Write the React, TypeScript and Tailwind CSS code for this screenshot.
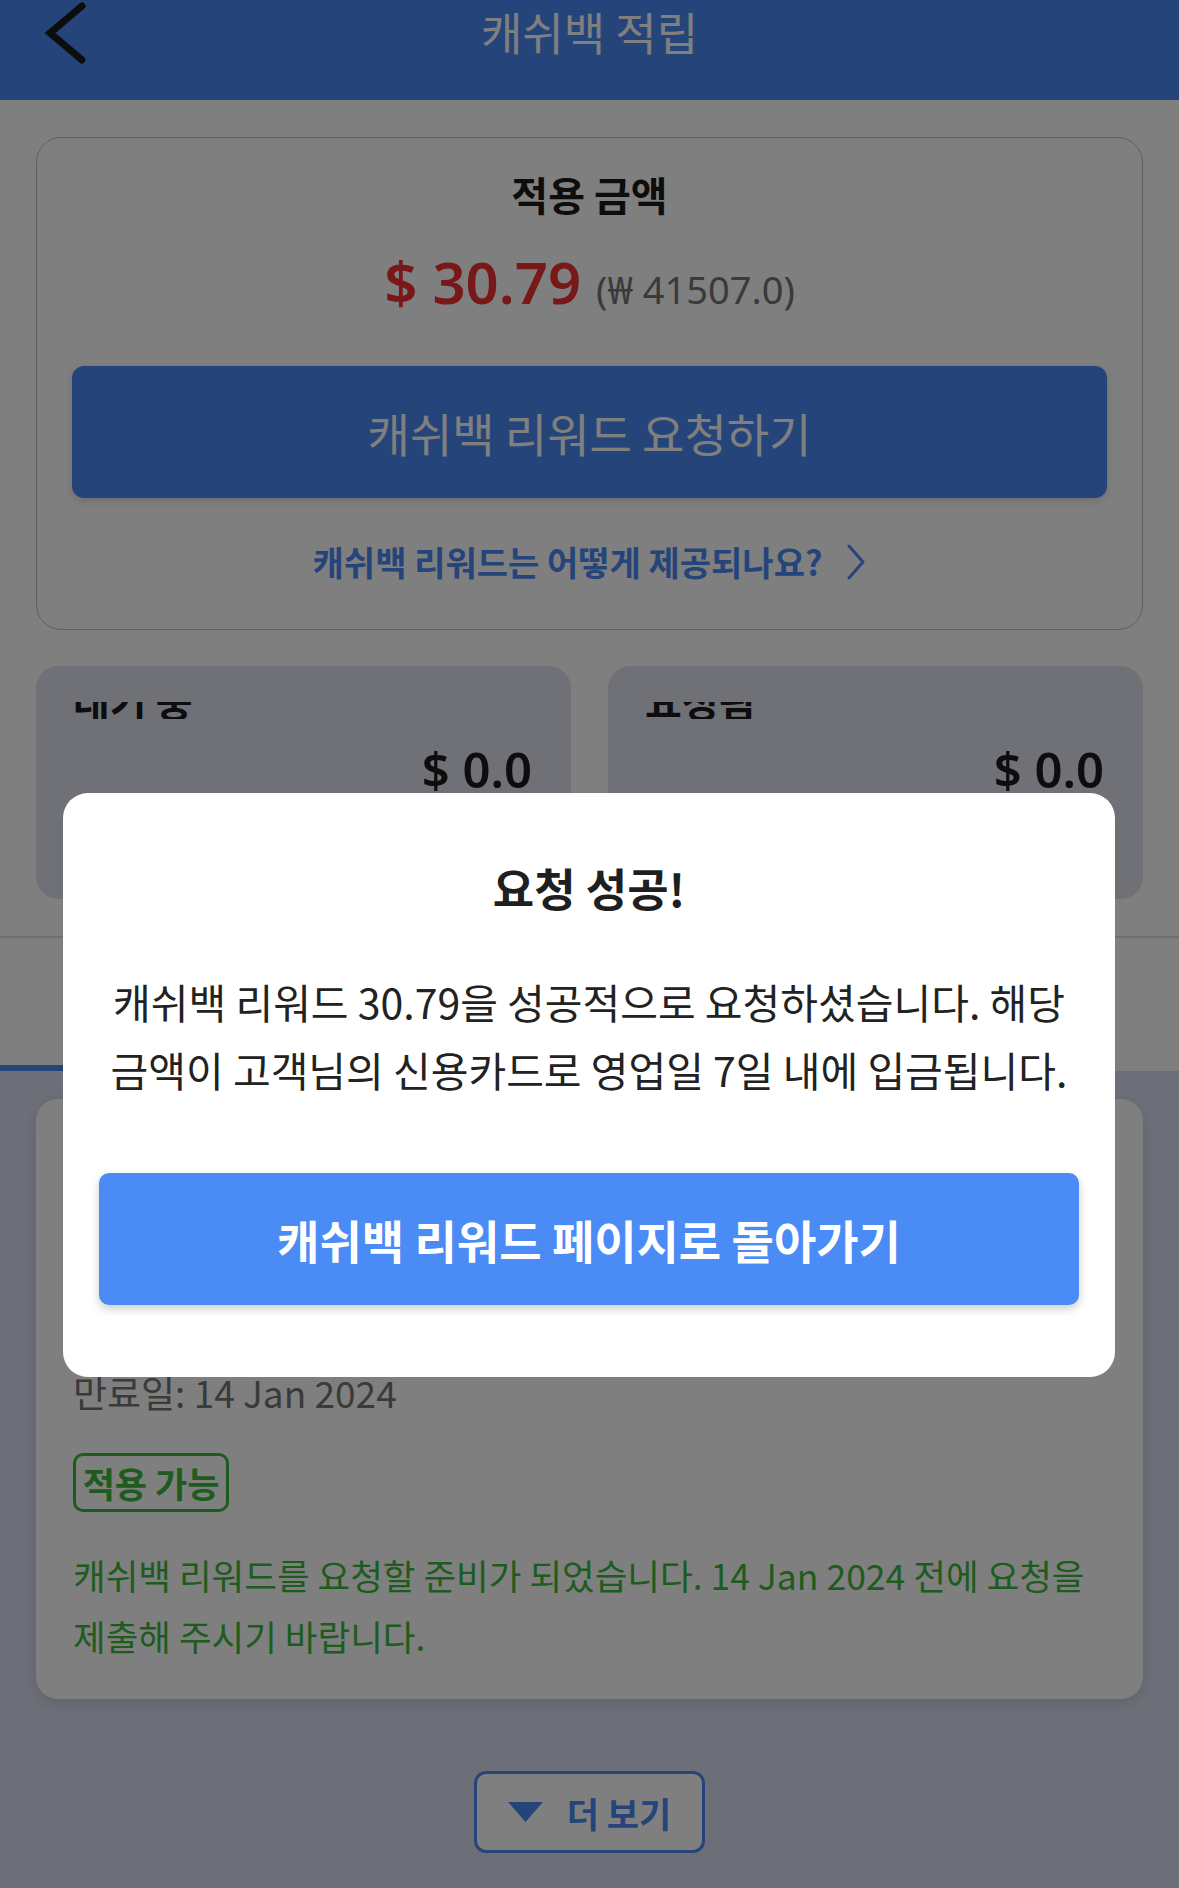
import React from "react";

function BackChevron() {
  return (
    <svg className="absolute left-[40px] top-0" width="52" height="68" viewBox="0 0 52 68" fill="none">
      <polyline points="42,6 10,33 42,60" stroke="#1b1b1b" strokeWidth="7" strokeLinecap="round" strokeLinejoin="miter" />
    </svg>
  );
}

function SmallCard({ label, value }: { label: string; value: string }) {
  return (
    <div className="h-[233px] rounded-[22px] bg-[#e1e3ee] pl-[37px] pr-[39px] pt-[36px]">
      <div className="h-[17px] overflow-hidden">
        <div className="-mt-[22px] text-[40px] font-bold leading-[40px] text-[#1a1a1a]">{label}</div>
      </div>
      <div className="mt-[24px] text-right font-['Noto_Sans',sans-serif] text-[49px] font-semibold leading-[52px] text-[#1a1a1a]">
        {value}
      </div>
    </div>
  );
}

export default function App() {
  return (
    <div className="relative h-[1888px] w-[1179px] overflow-hidden bg-[#dadff0] font-['Noto_Sans_CJK_KR',sans-serif]">
      {/* Header */}
      <header className="relative h-[100px] bg-[#4a8bf5]">
        <BackChevron />
        <h1 className="text-center text-[45px] leading-[64px] text-white">캐쉬백 적립</h1>
      </header>

      {/* Top section */}
      <section className="bg-white px-[36px] pt-[37px] pb-[37px]">
        <div className="flex flex-col items-center rounded-[25px] border border-[#b9c0d2] px-[35px] pt-[31px] pb-[47px]">
          <h2 className="text-[40px] font-bold leading-[50px] text-[#1a1a1a]">적용 금액</h2>
          <div className="mt-[28px] flex h-[70px] items-baseline font-['Noto_Sans',sans-serif]">
            <span className="text-[58px] font-semibold leading-[70px] text-[#f03030]">$ 30.79</span>
            <span className="ml-[15px] text-[38px] leading-[70px] text-[#757575]">(₩ 41507.0)</span>
          </div>
          <button className="mt-[49px] h-[132px] w-full rounded-[12px] bg-[#4a8bf5] text-[46px] leading-none text-white shadow-[0_3px_8px_rgba(0,0,0,0.15)]">
            캐쉬백 리워드 요청하기
          </button>
          <div className="mt-[44px] flex h-[40px] items-center gap-[24px]">
            <span className="text-[34px] font-bold leading-[40px] text-[#4a8bf5]">캐쉬백 리워드는 어떻게 제공되나요?</span>
            <svg width="20" height="36" viewBox="0 0 20 36" fill="none">
              <polyline points="3,2 17,18 3,34" stroke="#4a8bf5" strokeWidth="3" strokeLinecap="round" strokeLinejoin="round" />
            </svg>
          </div>
        </div>

        <div className="mt-[36px] grid grid-cols-2 gap-[37px]">
          <SmallCard label="대기 중" value="$ 0.0" />
          <SmallCard label="요청됨" value="$ 0.0" />
        </div>
      </section>

      {/* Tabs */}
      <div className="flex h-[135px] border-t-2 border-[#dcdce0] bg-white">
        <div className="flex-1 border-b-[6px] border-[#4a8bf5]" />
        <div className="flex-1 border-b-[6px] border-transparent" />
      </div>

      {/* Lower list */}
      <div className="px-[36px] pt-[28px]">
        <div className="rounded-[22px] bg-white px-[37px] pt-[270px] pb-[33px] shadow-[0_4px_14px_rgba(0,0,0,0.12)]">
          <div className="text-[37px] leading-[46px] text-[#757575]">만료일: 14 Jan 2024</div>
          <div className="mt-[38px] inline-flex h-[59px] w-[156px] items-center justify-center rounded-[10px] border-[3px] border-[#3cb83c] text-[35px] font-bold leading-none text-[#3cb83c]">
            적용 가능
          </div>
          <p className="mt-[32px] text-[35.5px] leading-[61px] text-[#3cb83c]">
            캐쉬백 리워드를 요청할 준비가 되었습니다. 14 Jan 2024 전에 요청을 제출해 주시기 바랍니다.
          </p>
        </div>
      </div>

      <div className="mt-[72px] flex justify-center">
        <button className="flex h-[82px] w-[231px] items-center justify-center gap-[24px] rounded-[12px] border-[3px] border-[#4a8bf5] bg-white">
          <svg width="35" height="20" viewBox="0 0 35 20">
            <polygon points="0,0 35,0 17.5,20" fill="#4a8bf5" />
          </svg>
          <span className="text-[35px] font-bold leading-none text-[#4a8bf5]">더 보기</span>
        </button>
      </div>

      {/* Overlay */}
      <div className="absolute inset-0 bg-black/50" />

      {/* Modal */}
      <div className="absolute left-[63px] top-[793px] w-[1052px] rounded-[25px] bg-white px-[36px] pt-[67px] pb-[72px]">
        <h3 className="text-center text-[45px] font-bold leading-[56px] text-[#1f1f1f]">요청 성공!</h3>
        <p className="mt-[51px] text-center text-[41px] leading-[68px] text-[#222222]">
          <span className="block">캐쉬백 리워드 30.79을 성공적으로 요청하셨습니다. 해당</span>
          <span className="block">금액이 고객님의 신용카드로 영업일 7일 내에 입금됩니다.</span>
        </p>
        <button className="mt-[70px] h-[132px] w-full rounded-[10px] bg-[#4a8bf5] text-[46px] font-bold leading-none text-white shadow-[0_4px_10px_rgba(0,0,0,0.2)]">
          캐쉬백 리워드 페이지로 돌아가기
        </button>
      </div>
    </div>
  );
}
